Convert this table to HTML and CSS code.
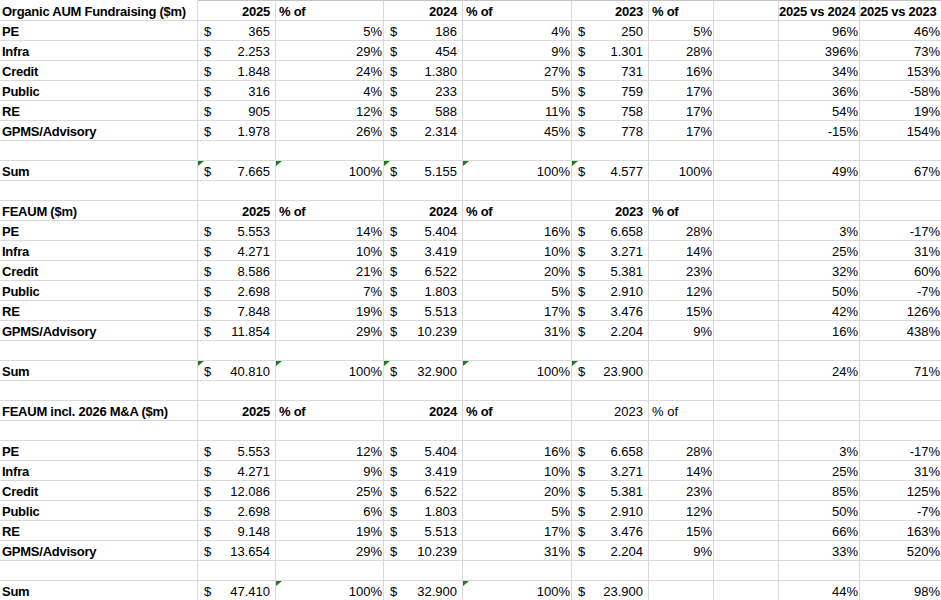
FILE: index.html
```html
<!DOCTYPE html>
<html>
<head>
<meta charset="utf-8">
<link rel="stylesheet" href="styles.css">
</head>
<body>
<div class="sheet">
  <div class="row first"><div class="c l">Organic AUM Fundraising ($m)</div><div class="c h">2025</div><div class="c o">% of</div><div class="c h">2024</div><div class="c o">% of</div><div class="c h">2023</div><div class="c o">% of</div><div class="c"></div><div class="c h">2025 vs 2024</div><div class="c h">2025 vs 2023</div></div>
  <div class="row"><div class="c l">PE</div><div class="c a"><span>$</span><span>365</span></div><div class="c p">5%</div><div class="c a"><span>$</span><span>186</span></div><div class="c p">4%</div><div class="c a"><span>$</span><span>250</span></div><div class="c p">5%</div><div class="c"></div><div class="c p">96%</div><div class="c p">46%</div></div>
  <div class="row"><div class="c l">Infra</div><div class="c a"><span>$</span><span>2.253</span></div><div class="c p">29%</div><div class="c a"><span>$</span><span>454</span></div><div class="c p">9%</div><div class="c a"><span>$</span><span>1.301</span></div><div class="c p">28%</div><div class="c"></div><div class="c p">396%</div><div class="c p">73%</div></div>
  <div class="row"><div class="c l">Credit</div><div class="c a"><span>$</span><span>1.848</span></div><div class="c p">24%</div><div class="c a"><span>$</span><span>1.380</span></div><div class="c p">27%</div><div class="c a"><span>$</span><span>731</span></div><div class="c p">16%</div><div class="c"></div><div class="c p">34%</div><div class="c p">153%</div></div>
  <div class="row"><div class="c l">Public</div><div class="c a"><span>$</span><span>316</span></div><div class="c p">4%</div><div class="c a"><span>$</span><span>233</span></div><div class="c p">5%</div><div class="c a"><span>$</span><span>759</span></div><div class="c p">17%</div><div class="c"></div><div class="c p">36%</div><div class="c p">-58%</div></div>
  <div class="row"><div class="c l">RE</div><div class="c a"><span>$</span><span>905</span></div><div class="c p">12%</div><div class="c a"><span>$</span><span>588</span></div><div class="c p">11%</div><div class="c a"><span>$</span><span>758</span></div><div class="c p">17%</div><div class="c"></div><div class="c p">54%</div><div class="c p">19%</div></div>
  <div class="row"><div class="c l">GPMS/Advisory</div><div class="c a"><span>$</span><span>1.978</span></div><div class="c p">26%</div><div class="c a"><span>$</span><span>2.314</span></div><div class="c p">45%</div><div class="c a"><span>$</span><span>778</span></div><div class="c p">17%</div><div class="c"></div><div class="c p">-15%</div><div class="c p">154%</div></div>
  <div class="row"><div class="c"></div><div class="c"></div><div class="c"></div><div class="c"></div><div class="c"></div><div class="c"></div><div class="c"></div><div class="c"></div><div class="c"></div><div class="c"></div></div>
  <div class="row"><div class="c l">Sum</div><div class="c a t"><span>$</span><span>7.665</span></div><div class="c p t">100%</div><div class="c a t"><span>$</span><span>5.155</span></div><div class="c p t">100%</div><div class="c a t"><span>$</span><span>4.577</span></div><div class="c p">100%</div><div class="c"></div><div class="c p">49%</div><div class="c p">67%</div></div>
  <div class="row"><div class="c"></div><div class="c"></div><div class="c"></div><div class="c"></div><div class="c"></div><div class="c"></div><div class="c"></div><div class="c"></div><div class="c"></div><div class="c"></div></div>

  <div class="row"><div class="c l">FEAUM ($m)</div><div class="c h">2025</div><div class="c o">% of</div><div class="c h">2024</div><div class="c o">% of</div><div class="c h">2023</div><div class="c o">% of</div><div class="c"></div><div class="c"></div><div class="c"></div></div>
  <div class="row"><div class="c l">PE</div><div class="c a"><span>$</span><span>5.553</span></div><div class="c p">14%</div><div class="c a"><span>$</span><span>5.404</span></div><div class="c p">16%</div><div class="c a"><span>$</span><span>6.658</span></div><div class="c p">28%</div><div class="c"></div><div class="c p">3%</div><div class="c p">-17%</div></div>
  <div class="row"><div class="c l">Infra</div><div class="c a"><span>$</span><span>4.271</span></div><div class="c p">10%</div><div class="c a"><span>$</span><span>3.419</span></div><div class="c p">10%</div><div class="c a"><span>$</span><span>3.271</span></div><div class="c p">14%</div><div class="c"></div><div class="c p">25%</div><div class="c p">31%</div></div>
  <div class="row"><div class="c l">Credit</div><div class="c a"><span>$</span><span>8.586</span></div><div class="c p">21%</div><div class="c a"><span>$</span><span>6.522</span></div><div class="c p">20%</div><div class="c a"><span>$</span><span>5.381</span></div><div class="c p">23%</div><div class="c"></div><div class="c p">32%</div><div class="c p">60%</div></div>
  <div class="row"><div class="c l">Public</div><div class="c a"><span>$</span><span>2.698</span></div><div class="c p">7%</div><div class="c a"><span>$</span><span>1.803</span></div><div class="c p">5%</div><div class="c a"><span>$</span><span>2.910</span></div><div class="c p">12%</div><div class="c"></div><div class="c p">50%</div><div class="c p">-7%</div></div>
  <div class="row"><div class="c l">RE</div><div class="c a"><span>$</span><span>7.848</span></div><div class="c p">19%</div><div class="c a"><span>$</span><span>5.513</span></div><div class="c p">17%</div><div class="c a"><span>$</span><span>3.476</span></div><div class="c p">15%</div><div class="c"></div><div class="c p">42%</div><div class="c p">126%</div></div>
  <div class="row"><div class="c l">GPMS/Advisory</div><div class="c a"><span>$</span><span>11.854</span></div><div class="c p">29%</div><div class="c a"><span>$</span><span>10.239</span></div><div class="c p">31%</div><div class="c a"><span>$</span><span>2.204</span></div><div class="c p">9%</div><div class="c"></div><div class="c p">16%</div><div class="c p">438%</div></div>
  <div class="row"><div class="c"></div><div class="c"></div><div class="c"></div><div class="c"></div><div class="c"></div><div class="c"></div><div class="c"></div><div class="c"></div><div class="c"></div><div class="c"></div></div>
  <div class="row"><div class="c l">Sum</div><div class="c a t"><span>$</span><span>40.810</span></div><div class="c p t">100%</div><div class="c a t"><span>$</span><span>32.900</span></div><div class="c p t">100%</div><div class="c a t"><span>$</span><span>23.900</span></div><div class="c"></div><div class="c"></div><div class="c p">24%</div><div class="c p">71%</div></div>
  <div class="row"><div class="c"></div><div class="c"></div><div class="c"></div><div class="c"></div><div class="c"></div><div class="c"></div><div class="c"></div><div class="c"></div><div class="c"></div><div class="c"></div></div>

  <div class="row"><div class="c l">FEAUM incl. 2026 M&amp;A ($m)</div><div class="c h">2025</div><div class="c o">% of</div><div class="c h">2024</div><div class="c o">% of</div><div class="c hn">2023</div><div class="c on">% of</div><div class="c"></div><div class="c"></div><div class="c"></div></div>
  <div class="row"><div class="c"></div><div class="c"></div><div class="c"></div><div class="c"></div><div class="c"></div><div class="c"></div><div class="c"></div><div class="c"></div><div class="c"></div><div class="c"></div></div>
  <div class="row"><div class="c l">PE</div><div class="c a"><span>$</span><span>5.553</span></div><div class="c p">12%</div><div class="c a"><span>$</span><span>5.404</span></div><div class="c p">16%</div><div class="c a"><span>$</span><span>6.658</span></div><div class="c p">28%</div><div class="c"></div><div class="c p">3%</div><div class="c p">-17%</div></div>
  <div class="row"><div class="c l">Infra</div><div class="c a"><span>$</span><span>4.271</span></div><div class="c p">9%</div><div class="c a"><span>$</span><span>3.419</span></div><div class="c p">10%</div><div class="c a"><span>$</span><span>3.271</span></div><div class="c p">14%</div><div class="c"></div><div class="c p">25%</div><div class="c p">31%</div></div>
  <div class="row"><div class="c l">Credit</div><div class="c a"><span>$</span><span>12.086</span></div><div class="c p">25%</div><div class="c a"><span>$</span><span>6.522</span></div><div class="c p">20%</div><div class="c a"><span>$</span><span>5.381</span></div><div class="c p">23%</div><div class="c"></div><div class="c p">85%</div><div class="c p">125%</div></div>
  <div class="row"><div class="c l">Public</div><div class="c a"><span>$</span><span>2.698</span></div><div class="c p">6%</div><div class="c a"><span>$</span><span>1.803</span></div><div class="c p">5%</div><div class="c a"><span>$</span><span>2.910</span></div><div class="c p">12%</div><div class="c"></div><div class="c p">50%</div><div class="c p">-7%</div></div>
  <div class="row"><div class="c l">RE</div><div class="c a"><span>$</span><span>9.148</span></div><div class="c p">19%</div><div class="c a"><span>$</span><span>5.513</span></div><div class="c p">17%</div><div class="c a"><span>$</span><span>3.476</span></div><div class="c p">15%</div><div class="c"></div><div class="c p">66%</div><div class="c p">163%</div></div>
  <div class="row"><div class="c l">GPMS/Advisory</div><div class="c a"><span>$</span><span>13.654</span></div><div class="c p">29%</div><div class="c a"><span>$</span><span>10.239</span></div><div class="c p">31%</div><div class="c a"><span>$</span><span>2.204</span></div><div class="c p">9%</div><div class="c"></div><div class="c p">33%</div><div class="c p">520%</div></div>
  <div class="row"><div class="c"></div><div class="c"></div><div class="c"></div><div class="c"></div><div class="c"></div><div class="c"></div><div class="c"></div><div class="c"></div><div class="c"></div><div class="c"></div></div>
  <div class="row"><div class="c l">Sum</div><div class="c a"><span>$</span><span>47.410</span></div><div class="c p t">100%</div><div class="c a"><span>$</span><span>32.900</span></div><div class="c p t">100%</div><div class="c a"><span>$</span><span>23.900</span></div><div class="c"></div><div class="c"></div><div class="c p">44%</div><div class="c p">98%</div></div>
</div>
</body>
</html>
```

FILE: styles.css
```css
html, body {
  margin: 0;
  padding: 0;
  background: #ffffff;
  overflow: hidden;
}

.sheet {
  width: 941px;
  font-family: "Liberation Sans", Arial, sans-serif;
  font-size: 13px;
  color: #000000;
}

.row {
  display: grid;
  grid-template-columns: 198px 78px 108px 79px 109px 77px 65px 65px 81px 81px;
  height: 20px;
}

.row.first {
  height: 21px;
}

.c {
  position: relative;
  box-sizing: border-box;
  height: 100%;
  border-right: 1px solid #dadada;
  border-bottom: 1px solid #dadada;
  line-height: 15px;
  padding-top: 3px;
  white-space: nowrap;
  overflow: visible;
}

.row .c:last-child {
  border-right: none;
}

.row.first .c {
  border-top: 1px solid #c4c4c4;
}

.row.first .c:first-child {
  border-top-color: #ffffff;
}

.l {
  font-weight: bold;
  letter-spacing: -0.25px;
  padding-left: 2px;
}

.h {
  font-weight: bold;
  letter-spacing: -0.25px;
  text-align: right;
  padding-right: 5px;
}

.hn {
  text-align: right;
  padding-right: 5px;
}

.o {
  font-weight: bold;
  letter-spacing: -0.25px;
  padding-left: 3px;
}

.on {
  padding-left: 3px;
}

.a {
  display: flex;
  justify-content: space-between;
  padding-left: 6px;
  padding-right: 5px;
}

.p {
  text-align: right;
  padding-right: 1px;
}

.t::before {
  content: "";
  position: absolute;
  left: 0;
  top: 0;
  width: 0;
  height: 0;
  border-top: 5px solid #1e7b1e;
  border-right: 6px solid transparent;
}
```
